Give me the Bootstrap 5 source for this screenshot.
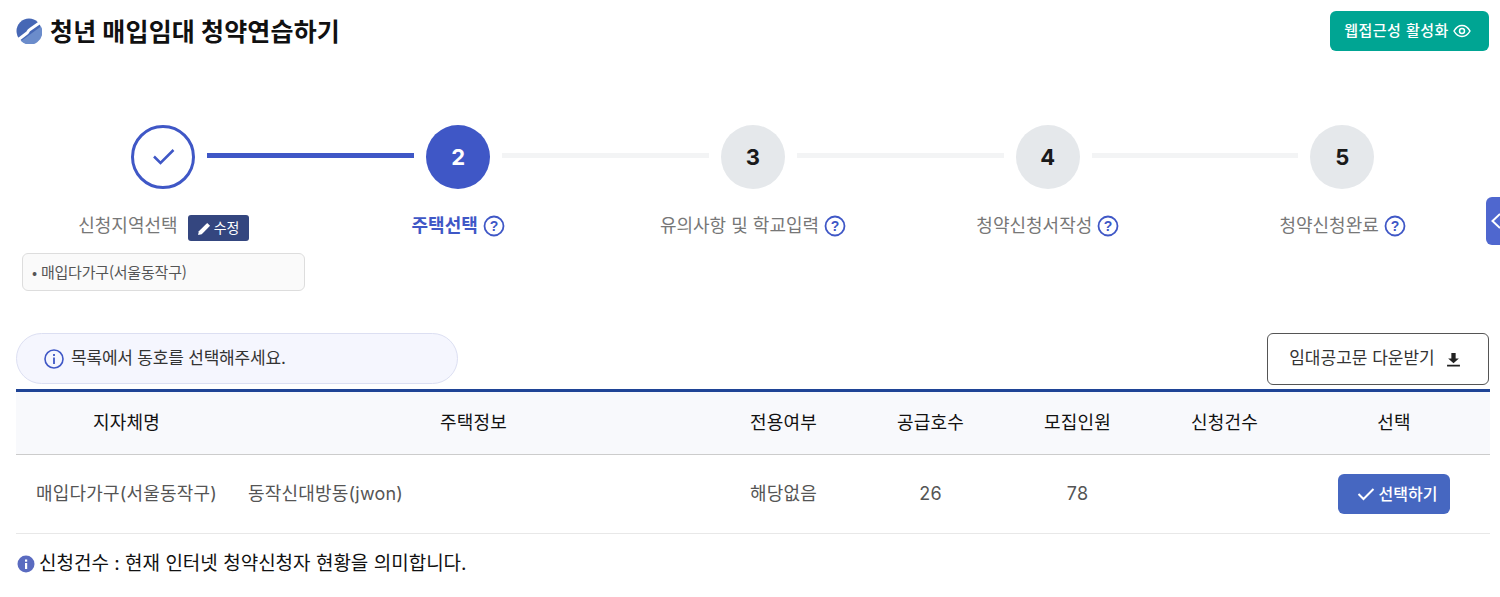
<!DOCTYPE html>
<html lang="ko">
<head>
    <meta charset="UTF-8">
    <title>청년 매입임대 청약연습하기</title>
    <link href="https://cdn.jsdelivr.net/npm/bootstrap@5.3.3/dist/css/bootstrap.min.css" rel="stylesheet">
    <style>
        html, body { height: 597px; overflow: hidden; }
        body { font-family: "Inter", "Noto Sans CJK KR", "Noto Sans", sans-serif; color: #111; background: #fff; }
        .page-wrap { padding: 11px 11px 0 16px; width: 1500px; }
        .page-title { font-size: 25px; font-weight: 700; line-height: 38px; color: #111; margin: 0; padding-top: 2px; letter-spacing: 0.15px; }
        .btn-access { background: #00a593; color: #fff; font-size: 15px; font-weight: 500; letter-spacing: 0.5px; height: 40px; width: 159px; border-radius: 6px; border: 0; padding: 0 4px 0 0; }
        .step-head { margin-top: 74px; padding: 0 114.6px 0 115.4px; }
        .step-dot { width: 64px; height: 64px; border-radius: 50%; flex: none; background: #e5e8eb; color: #1a1a1a; font-size: 22px; font-weight: 700; }
        .step-dot.is-done { background: #fff; border: 3px solid #3f57c6; }
        .step-dot.is-now { background: #3f57c6; color: #fff; }
        .step-line { flex: 1; height: 5px; margin: 0 12px 4px; background: #f3f4f5; }
        .step-line.is-done { background: #3f57c6; }
        .step-labels { display: grid; grid-template-columns: repeat(5, 1fr); margin-top: 22px; width: 1474px; }
        .step-name { font-size: 18px; line-height: 30px; color: #777; height: 30px; gap: 5px; }
        .step-name.is-now { color: #3f57c6; font-weight: 700; }
        .btn-edit { background: #34467f; color: #fff; font-size: 14px; height: 26px; width: 61px; border-radius: 3px; margin: 4px 0 0 5px; gap: 2px; }
        .region-box { width: 283px; height: 38px; margin: 12px 0 0 6px; background: #fafafa; border: 1px solid #ddd; border-radius: 6px; font-family: "Noto Sans CJK KR", sans-serif; font-size: 15px; letter-spacing: -0.2px; color: #555; padding-left: 9px; line-height: 36px; }
        .info-row { margin-top: 42px; }
        .info-pill { width: 442px; height: 51px; background: #f5f6fe; border: 1px solid #dcdff2; border-radius: 26px; padding-left: 27px; font-size: 17px; letter-spacing: -0.2px; color: #333; gap: 7px; }
        .btn-notice { width: 222px; height: 52px; background: #fff; border: 1px solid #555; border-radius: 6px; font-size: 17px; color: #333; gap: 11px; padding: 0 6px 0 0; }
        .apply-table { table-layout: fixed; width: 1474px; margin: 4px 0 0; border-top: 3px solid #1f4496; font-size: 18px; letter-spacing: 0.2px; }
        .apply-table th { background: #f8f9fc; font-weight: 400; color: #111; height: 64px; text-align: center; vertical-align: middle; border-bottom: 1px solid #ccc; padding: 0 0 1px; }
        .apply-table td { height: 79px; text-align: center; vertical-align: middle; color: #555; border-bottom: 1px solid #e8e8e8; padding: 0 0 1px; }
        .apply-table td.cell-left { text-align: left; padding-left: 11px; }
        .apply-table td.cell-pick { padding: 0; }
        .btn-pick { width: 112px; height: 40px; background: #4667c1; color: #fff; border: 0; border-radius: 6px; font-size: 16px; font-weight: 500; letter-spacing: 0; padding: 0 0 0 6px; }
        .note-line { font-size: 19px; line-height: 28px; margin-top: 16px; color: #111; gap: 4px; }
        .note-line svg { margin-left: 1px; }
        .side-tab { position: absolute; left: 1486px; top: 197px; width: 30px; height: 48px; background: #4f67cf; border-radius: 6px 0 0 6px; }
    </style>
</head>
<body>
<div class="page-wrap">

    <!-- Title -->
    <div class="d-flex justify-content-between align-items-center">
        <div class="d-flex align-items-center gap-2">
            <svg width="26" height="26" viewBox="0 0 26 26">
                <circle cx="13" cy="13" r="12.500" fill="#4667b5"/>
                <path d="M25 8.500A12.500 12.500 0 0 1 5 23z" fill="#6b8ccb"/>
                <path d="M2.500 21.500L11 15c1.500-1.200 1-2.500 3-3.500l10-7" fill="none" stroke="#fff" stroke-width="3"/>
            </svg>
            <h1 class="page-title">청년 매입임대 청약연습하기</h1>
        </div>
        <button type="button" class="btn btn-access d-flex align-items-center justify-content-center gap-1">
            웹접근성 활성화
            <svg width="18" height="14" viewBox="0 0 18 14" fill="none" stroke="#fff" stroke-width="1.500">
                <path d="M1 7c2-3.500 5-5.500 8-5.500S15 3.500 17 7c-2 3.500-5 5.500-8 5.500S3 10.500 1 7z"/>
                <circle cx="9" cy="7" r="2.500"/>
            </svg>
        </button>
    </div>

    <!-- Steps -->
    <div class="step-head d-flex align-items-center">
        <div class="step-dot is-done d-flex align-items-center justify-content-center">
            <svg width="24" height="24" viewBox="0 0 24 24" fill="none" stroke="#3f57c6" stroke-width="2.500"><path d="M3 11.500l6.500 6.500L22.500 5"/></svg>
        </div>
        <div class="step-line is-done"></div>
        <div class="step-dot is-now d-flex align-items-center justify-content-center">2</div>
        <div class="step-line"></div>
        <div class="step-dot d-flex align-items-center justify-content-center">3</div>
        <div class="step-line"></div>
        <div class="step-dot d-flex align-items-center justify-content-center">4</div>
        <div class="step-line"></div>
        <div class="step-dot d-flex align-items-center justify-content-center">5</div>
    </div>

    <div class="step-labels">
        <div>
            <div class="step-name d-flex align-items-center justify-content-center">
                신청지역선택
                <span class="btn-edit d-inline-flex align-items-center justify-content-center">
                    <svg width="15" height="15" viewBox="0 0 14 14" fill="#fff"><path d="M1 13l.7-3.400L9.500 1.800l2.700 2.700-7.800 7.800z"/></svg>수정
                </span>
            </div>
            <div class="region-box">• 매입다가구(서울동작구)</div>
        </div>
        <div class="step-name is-now d-flex align-items-center justify-content-center">주택선택
            <svg width="22" height="22" viewBox="0 0 22 22"><circle cx="11" cy="11" r="9.500" fill="none" stroke="#3f57c6" stroke-width="1.800"/><text x="11" y="16" text-anchor="middle" font-size="14" font-weight="700" fill="#3f57c6" font-family="Liberation Sans">?</text></svg>
        </div>
        <div class="step-name d-flex align-items-center justify-content-center">유의사항 및 학교입력
            <svg width="22" height="22" viewBox="0 0 22 22"><circle cx="11" cy="11" r="9.500" fill="none" stroke="#3f57c6" stroke-width="1.800"/><text x="11" y="16" text-anchor="middle" font-size="14" font-weight="700" fill="#3f57c6" font-family="Liberation Sans">?</text></svg>
        </div>
        <div class="step-name d-flex align-items-center justify-content-center">청약신청서작성
            <svg width="22" height="22" viewBox="0 0 22 22"><circle cx="11" cy="11" r="9.500" fill="none" stroke="#3f57c6" stroke-width="1.800"/><text x="11" y="16" text-anchor="middle" font-size="14" font-weight="700" fill="#3f57c6" font-family="Liberation Sans">?</text></svg>
        </div>
        <div class="step-name d-flex align-items-center justify-content-center">청약신청완료
            <svg width="22" height="22" viewBox="0 0 22 22"><circle cx="11" cy="11" r="9.500" fill="none" stroke="#3f57c6" stroke-width="1.800"/><text x="11" y="16" text-anchor="middle" font-size="14" font-weight="700" fill="#3f57c6" font-family="Liberation Sans">?</text></svg>
        </div>
    </div>

    <!-- Info + download -->
    <div class="info-row d-flex justify-content-between align-items-start">
        <div class="info-pill d-flex align-items-center">
            <svg width="20" height="20" viewBox="0 0 20 20"><circle cx="10" cy="10" r="9" fill="none" stroke="#3f57c6" stroke-width="1.600"/><rect x="9.100" y="8.500" width="1.800" height="6.500" fill="#3f57c6"/><rect x="9.100" y="5" width="1.800" height="2" fill="#3f57c6"/></svg>
            목록에서 동호를 선택해주세요.
        </div>
        <button type="button" class="btn btn-notice d-flex align-items-center justify-content-center">
            임대공고문 다운받기
            <svg width="15" height="15" viewBox="0 0 14 14" fill="#222"><path d="M5 1h4v5h3L7 10.500 2 6h3zM1 12h12v1.600H1z"/></svg>
        </button>
    </div>

    <!-- Table -->
    <table class="apply-table">
        <colgroup>
            <col style="width:221px"><col style="width:473px"><col style="width:147px"><col style="width:147px"><col style="width:147px"><col style="width:147px"><col style="width:192px">
        </colgroup>
        <thead>
            <tr><th>지자체명</th><th>주택정보</th><th>전용여부</th><th>공급호수</th><th>모집인원</th><th>신청건수</th><th>선택</th></tr>
        </thead>
        <tbody>
            <tr>
                <td>매입다가구(서울동작구)</td>
                <td class="cell-left">동작신대방동(jwon)</td>
                <td>해당없음</td>
                <td>26</td>
                <td>78</td>
                <td></td>
                <td class="cell-pick">
                    <button type="button" class="btn btn-pick d-inline-flex align-items-center justify-content-center gap-1">
                        <svg width="18" height="14" viewBox="0 0 18 14" fill="none" stroke="#fff" stroke-width="2"><path d="M1.500 7l5 5L16.500 2"/></svg>
                        선택하기
                    </button>
                </td>
            </tr>
        </tbody>
    </table>

    <div class="note-line d-flex align-items-center">
        <svg width="18" height="18" viewBox="0 0 18 18"><circle cx="9" cy="9" r="8.500" fill="#5a6bc0"/><rect x="8" y="8" width="2.200" height="6" fill="#fff"/><rect x="8" y="4.500" width="2.200" height="2.200" fill="#fff"/></svg>
        신청건수 : 현재 인터넷 청약신청자 현황을 의미합니다.
    </div>
</div>

<div class="side-tab d-flex align-items-center">
    <svg width="14" height="20" viewBox="0 0 14 20" fill="none" stroke="#fff" stroke-width="2"><path d="M14 3L6.500 10l7.500 7"/></svg>
</div>

<script src="https://cdn.jsdelivr.net/npm/bootstrap@5.3.3/dist/js/bootstrap.bundle.min.js"></script>
</body>
</html>
